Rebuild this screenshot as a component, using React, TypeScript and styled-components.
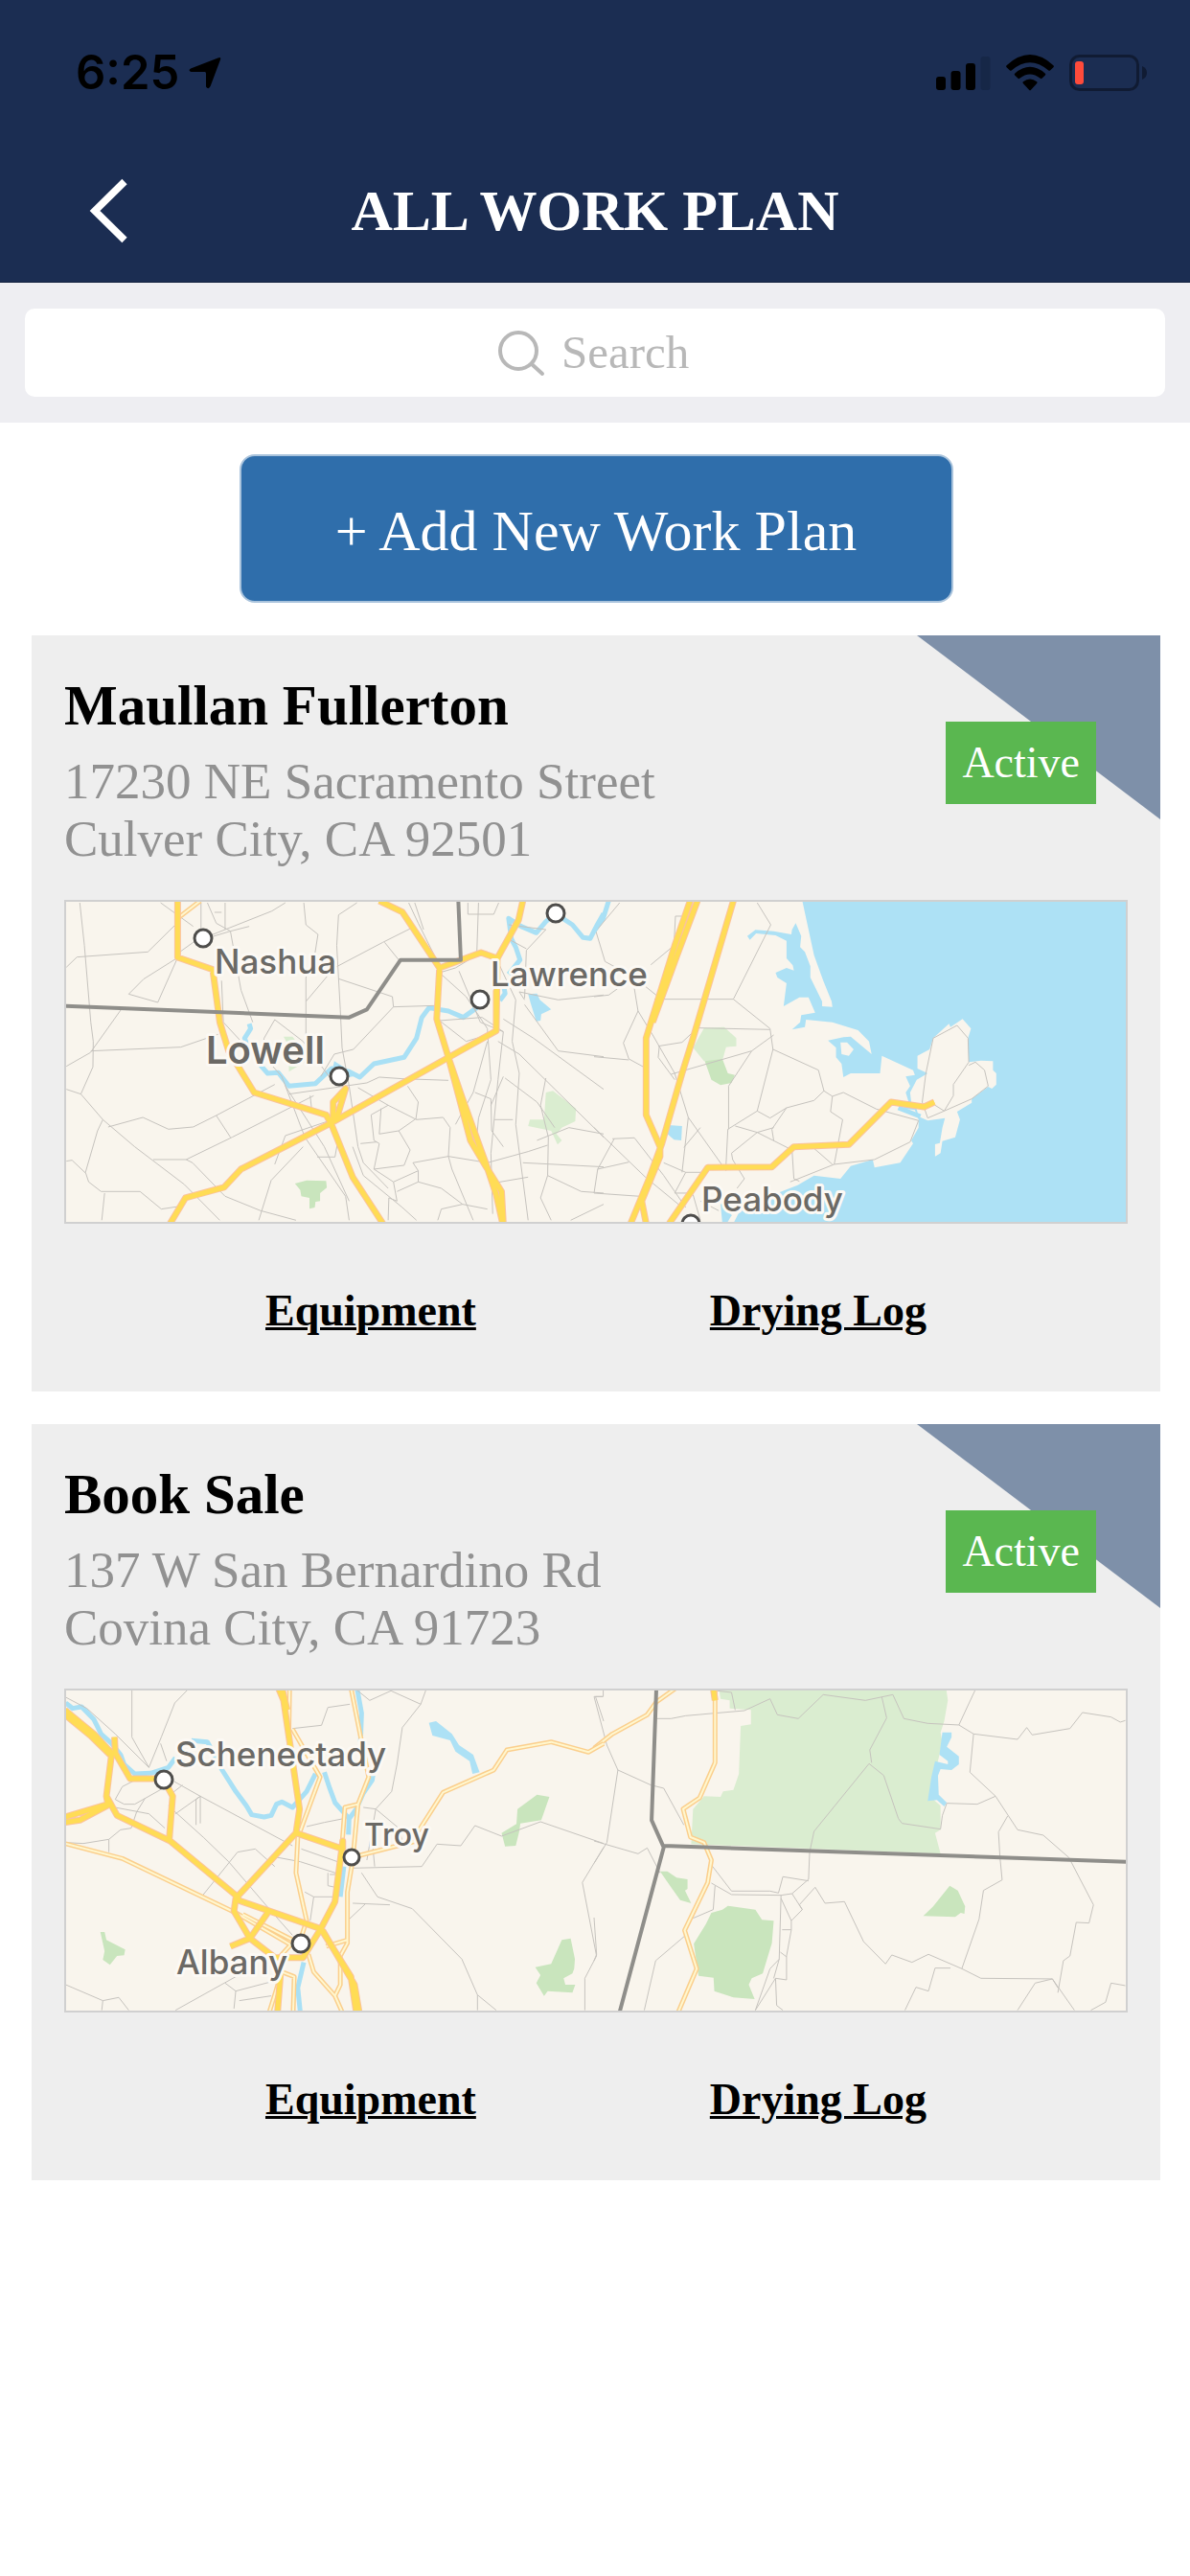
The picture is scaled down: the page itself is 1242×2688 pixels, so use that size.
import React from "react";
import styled, { createGlobalStyle } from "styled-components";

const GlobalStyle = createGlobalStyle`
  *, *::before, *::after { box-sizing: border-box; }
  body {
    margin: 0;
    background: #ffffff;
    color: #000000;
    font-family: "Liberation Serif", "Times New Roman", serif;
  }
  h1, h2, p { margin: 0; }
`;

/* ---------- header ---------- */

const Header = styled.header`
  background: #1b2d52;
  border-bottom: 1px solid #14223f;
`;

const StatusBar = styled.div`
  display: flex;
  align-items: center;
  justify-content: space-between;
  padding: 57px 44px 51px 79px;
`;

const StatusGroup = styled.div<{ $gap: number }>`
  display: flex;
  align-items: center;
  gap: ${(p) => p.$gap}px;
`;

const Clock = styled.span`
  font-family: Inter, "Liberation Sans", sans-serif;
  font-size: 49px;
  font-weight: 600;
  line-height: 38px;
`;

const NavBar = styled.nav`
  display: grid;
  grid-template-columns: 1fr auto 1fr;
  align-items: center;
  padding: 40px 90px;
`;

const BackButton = styled.button`
  justify-self: start;
  display: flex;
  padding: 0;
  border: 0;
  background: none;
  cursor: pointer;
`;

const ScreenTitle = styled.h1`
  color: #ffffff;
  font-size: 60px;
  font-weight: 700;
  line-height: 68px;
`;

/* ---------- search ---------- */

const SearchBar = styled.div`
  padding: 27px 26px;
  background: #eeeef2;
`;

const SearchField = styled.label`
  display: flex;
  align-items: center;
  justify-content: center;
  gap: 16px;
  height: 92px;
  border-radius: 10px;
  background: #ffffff;
`;

const SearchInput = styled.input`
  width: 136px;
  padding: 0;
  border: 0;
  outline: 0;
  background: none;
  font-family: inherit;
  font-size: 49px;
  line-height: 56px;
  color: #000000;
  &::placeholder {
    color: #b8b8b8;
    opacity: 1;
  }
`;

/* ---------- content ---------- */

const Content = styled.main`
  display: flex;
  flex-direction: column;
  align-items: center;
  gap: 34px;
  padding: 33px 31px 33px 33px;
`;

const AddButton = styled.button`
  width: 745px;
  max-width: 100%;
  height: 155px;
  padding: 4px 0 0;
  border: 2px solid #a9c3dc;
  border-radius: 16px;
  background: #2f6eab;
  color: #ffffff;
  font-family: inherit;
  font-size: 60px;
  line-height: 68px;
  cursor: pointer;
`;

const Card = styled.article`
  position: relative;
  align-self: stretch;
  background: #eeeeee;
`;

const CardBody = styled.div`
  padding: 34px 34px 0;
`;

const Corner = styled.div`
  position: absolute;
  top: 0;
  right: 0;
  width: 254px;
  height: 192px;
  background: #7e90a9;
  clip-path: polygon(0 0, 100% 0, 100% 100%);
`;

const StatusBadge = styled.span`
  position: absolute;
  top: 90px;
  right: 67px;
  padding: 16px 17px;
  background: #5ab750;
  color: #ffffff;
  font-size: 46px;
  line-height: 54px;
`;

const PlanName = styled.h2`
  font-size: 59px;
  font-weight: 700;
  line-height: 78px;
`;

const Address = styled.p`
  margin-top: 10px;
  color: #919191;
  font-size: 53px;
  line-height: 60px;
`;

const MapFrame = styled.div`
  margin-top: 34px;
  height: 338px;
  border: 2px solid #d0d0d0;
  background: #f9f5ed;
  overflow: hidden;
`;

const MapSvg = styled.svg`
  display: block;
  width: 100%;
  height: 100%;
`;

const Links = styled.div`
  display: flex;
  justify-content: space-evenly;
  padding: 64px 0 57px;
`;

const TextLink = styled.a`
  color: #000000;
  font-size: 46px;
  font-weight: 700;
  line-height: 54px;
  text-decoration: underline;
  text-decoration-thickness: 3px;
`;

/* ---------- map layers ---------- */

const Minor = styled.path`
  fill: none;
  stroke: #c6c3be;
  stroke-width: 1px;
  vector-effect: non-scaling-stroke;
`;

const River = styled.path`
  fill: none;
  stroke: #a9e0f5;
  stroke-width: 5px;
  stroke-linejoin: round;
  vector-effect: non-scaling-stroke;
`;

const Border = styled.path`
  fill: none;
  stroke: #8f8e8a;
  stroke-width: 4px;
  stroke-linejoin: round;
  vector-effect: non-scaling-stroke;
`;

const Stroke = styled.path<{ $color: string; $width: number }>`
  fill: none;
  stroke: ${(p) => p.$color};
  stroke-width: ${(p) => p.$width}px;
  stroke-linejoin: round;
  vector-effect: non-scaling-stroke;
`;

const Area = styled.path<{ $color: string }>`
  fill: ${(p) => p.$color};
`;

type LabelSize = "small" | "medium" | "large";

const labelFont = { small: 32, medium: 35, large: 40 };

const PlaceName = styled.text<{ $size: LabelSize }>`
  font-family: Inter, "Liberation Sans", sans-serif;
  font-size: ${(p) => labelFont[p.$size]}px;
  font-weight: ${(p) => (p.$size === "large" ? 600 : 500)};
  fill: #6b6965;
  stroke: #fcf9f4;
  stroke-width: 6px;
  stroke-linejoin: round;
  paint-order: stroke;
`;

const WATER = "#ade1f5";
const PARK = "#c9e5bd";
const FOREST = "#daedd0";

/* Each map is made of a west and an east tile, each with its own grid. */
type Tile = {
  areas?: [string, string][];
  minor: string;
  rivers?: string;
  highways: string;
  routes?: string;
  border?: string;
};

type Place = { name: string; x: number; y: number; size: LabelSize };
type Dot = { x: number; y: number; r: number };

type MapData = {
  label: string;
  top: number;
  west: Tile;
  east: Tile;
  places: Place[];
  dots: Dot[];
};

const TileLayers = ({ tile }: { tile: Tile }) => (
  <>
    {tile.areas?.map(([color, d]) => <Area key={d} $color={color} d={d} />)}
    {tile.rivers && <River d={tile.rivers} />}
    <Minor d={tile.minor} />
    {tile.routes && (
      <>
        <Stroke $color="#fbcf8d" $width={5} d={tile.routes} />
        <Stroke $color="#fff7cf" $width={2} d={tile.routes} />
      </>
    )}
    <Stroke $color="#fbc39d" $width={7} d={tile.highways} />
    <Stroke $color="#ffdc55" $width={5} d={tile.highways} />
    {tile.border && <Border d={tile.border} />}
  </>
);

const AreaMap = ({ map }: { map: MapData }) => (
  <MapFrame>
    <MapSvg
      viewBox="0 0 1106 334"
      preserveAspectRatio="xMidYMid slice"
      role="img"
      aria-label={map.label}
    >
      <g transform={`matrix(0.3827 0 0 0.3333 551 ${map.top})`}>
        <TileLayers tile={map.east} />
      </g>
      <g transform={`matrix(0.3699 0 0 0.3333 -19 ${map.top})`}>
        <TileLayers tile={map.west} />
      </g>
      {map.dots.map((d) => (
        <circle key={`${d.x}-${d.y}`} cx={d.x} cy={d.y} r={d.r} fill="#fff" stroke="#4e4d4b" strokeWidth="3" />
      ))}
      {map.places.map((p) => (
        <PlaceName key={p.name} x={p.x} y={p.y} $size={p.size}>
          {p.name}
        </PlaceName>
      ))}
    </MapSvg>
  </MapFrame>
);

const lowellMap: MapData = {
  label: "Map of Nashua, Lowell, Lawrence and Peabody",
  top: -21,
  west: {
    areas: [
      [PARK, "M697 945L730 935L785 937L787 958L768 975L768 1000L755 1002L753 1020L738 1024L738 990L715 985L712 965Z"],
      [FOREST, "M1405 660L1425 655L1490 710L1488 750L1450 770L1435 790L1450 810L1438 823L1420 780L1355 765L1360 745L1400 745Z"],
      [FOREST, "M665 485L690 485L715 520L725 565L680 595L680 570L695 545Z"],
      [WATER, "M1355 352L1380 350L1388 370L1420 400L1392 415L1390 435L1378 437L1362 380Z"],
      [WATER, "M808 562L850 590L880 605L850 612L800 600Z"],
    ],
    rivers:
      "M568 445L572 460L555 490L565 520M600 575L620 600L650 598L680 640L755 632L800 585L850 595L880 612L920 570L1005 550L1040 490L1055 425L1075 395L1130 405L1172 425L1210 395M1275 372L1290 350L1286 325M1300 290L1332 245L1320 205L1308 180L1300 115L1335 140L1378 160L1405 125L1432 100L1480 135L1510 175L1530 178L1550 135L1568 100",
    minor:
      "M90 66L103 200L121 440L128 500L127 580L93 665L155 745L245 830L385 948L485 1060M52 268L82 236L282 220L366 128M52 578L120 535L210 395M121 530L375 518L480 478M228 352L310 378L366 238M228 352L270 305L366 238M318 66L410 140M432 66V170M670 66L632 92L500 150L410 190L366 225M450 66L475 130L515 155L545 340L578 440M500 66V150M470 96H490M440 180L515 155L568 140M722 66L728 135L762 165L750 250L728 300V498M872 66L820 104L815 200L825 400L830 520L850 640L875 830L890 880L960 960M1035 140L945 190L808 270L728 375M950 190L990 245M820 304L972 360L975 392L862 525L808 540L770 610M975 392L1095 388M1018 66L1045 130L1090 230M1035 66L1060 150M93 665L52 650M155 745L140 780L106 910L115 940L150 970L260 970L320 1025L380 1015M160 975L152 1060M52 875L68 872L106 912M170 768L268 738L340 775L410 768L475 732L640 635M475 732L515 800M297 870H390L408 880L500 985L600 1030L700 1060M390 870L520 800L750 670M490 310L495 440L545 500L620 560L660 610L725 800L840 985L850 1060M640 432L610 490L600 560M640 432L720 500L800 620M670 640L780 830L850 1000M595 1060L630 935L720 830M640 885L670 795L790 750M760 862H810L820 800M680 665L900 630L935 612L1000 617L1130 622M740 670L745 720M875 645L960 700L1040 745L1115 738L1135 770L1130 860M1015 640L1045 690L1038 745M960 700L912 730L920 810L935 820L920 900L1005 888L1022 840L990 780L1035 745M860 830L890 920L1000 1020L1040 1060M882 820L928 815M960 1060L962 990L985 1000L975 940M940 710L935 790L990 780M920 900L975 940L1045 905L1030 880L1130 860M1045 905V940L1110 960L1170 1010M1045 940L985 970M1130 860L1140 900L1200 1060M1100 1060L1110 1025L1170 1010L1240 1025M1130 860L1240 880L1355 845L1410 825M1250 945L1355 925M1105 285L1150 270L1210 230L1215 66M1105 285L1180 360L1240 460L1250 620L1215 740L1210 800M1160 280L1220 440L1285 470M1265 240L1320 370L1310 500L1330 600L1320 760L1355 1060M1105 435L1180 500L1240 480M1105 435L1225 425L1285 470L1270 620L1250 850L1255 1040M1285 430L1370 490L1568 650M1270 500L1330 540L1568 800M1345 370L1330 345L1440 370L1568 355M1345 385L1440 530L1568 548M1285 610L1250 700M1290 615L1380 690L1430 770M1405 615L1390 700L1412 800L1410 920L1390 990L1420 1060M1340 880L1568 893M1410 920L1505 970L1568 975M1380 810L1470 770L1568 790M1475 1060L1568 1010M1205 660L1250 680L1252 780L1285 830M1260 745H1312M1240 500L1200 660L1150 760M1185 66V102H1258L1272 66M1345 365L1350 215L1405 150L1300 135M1350 210L1300 180",
    routes: "M366 115L430 60",
    highways:
      "M366 60V237L465 275L485 440L510 530L582 660L785 730L800 760L860 925L945 1070M345 1070L388 990L497 957L545 900L800 755L1265 467L1268 240M1340 60L1328 120L1268 240L1222 222L1105 270L1000 95L935 60M1105 270L1097 430L1130 550L1192 810L1235 890L1280 970L1285 1070M1130 550L1170 680L1235 880L1265 980L1283 1070M805 755V690L840 648L815 740M1265 467V340",
    border: "M46 389L850 425L900 400L995 245H1165L1158 60",
  },
  east: {
    areas: [
      [
        WATER,
        "M568 60L600 230L625 310L648 375L650 392L622 390L622 375L590 300L590 265L575 220L562 205L565 170L550 130L540 150L538 165L490 155L440 151L418 170L425 182L442 162L495 168L525 185L525 240L542 262L545 278L525 270L495 285L500 300L525 318L517 390L560 362L585 362L603 410L565 418L562 440L540 463L575 455L578 432L650 440L720 465L750 500L757 540L700 485L680 487L638 497L660 520L660 550L675 570L680 612L700 600L780 600L785 545L870 590L875 605L850 610L862 640L850 660L858 690L840 710L875 715L885 745L885 770L865 810L870 820L835 880L765 895L760 870L700 890L672 930L600 920L555 950L500 975L430 1000L415 1040L400 1025L380 1070H1460V60Z",
      ],
      [
        "#f9f5ed",
        "M882 545L915 525L925 490L968 445L972 455L1005 430L1028 460L1020 490L1022 565L1055 560L1088 562L1088 590L1097 600L1097 635L1085 648L1075 642L1030 680L1030 692L990 720L998 745L985 800L950 812L945 850L930 860L930 822L943 818L950 770L957 740L910 748L885 735L880 712L865 690L862 660L880 620L910 600L882 585Z",
      ],
      ["#f9f5ed", "M672 503L690 503L708 525L695 545L675 540Z"],
      [WATER, "M203 762L240 765L238 810L218 808L200 790Z"],
      [WATER, "M345 1010L362 1000L375 1045L362 1070H350Z"],
      [FOREST, "M300 458L355 455L388 490L388 515L360 518L350 560L300 562L270 520Z"],
      [PARK, "M302 562L350 555L365 600L384 605L375 630L345 637L320 620Z"],
    ],
    rivers: "M0 155L25 115L40 60M890 735L830 708",
    minor:
      "M445 66L482 135L380 368H165M380 368L480 460L488 525L445 718L365 775L360 885M285 458L480 463M490 480L430 530L210 603M430 530L367 640V775M488 525L612 590L627 655L600 685L525 708L480 740L445 718M627 655L650 672L645 720L678 745L655 885M650 672L680 660L770 712L885 748L862 815L765 870L655 885L535 940M490 770L445 785L375 850L378 870L410 930L390 960M385 765L445 785L540 840L545 930L560 938M160 480L220 600L257 738L240 910M257 738L360 905M245 832L290 770M110 335L120 405L80 505L95 555L135 580M120 405L160 480M175 515L240 503L280 460M178 515L175 550L220 620M0 360L40 355L70 330M70 66L5 155L30 250L110 300L180 365M240 108H222L218 200L155 260M0 548L95 558M0 770L140 925L230 1010M50 805L110 802L190 920L250 1020M190 880L250 910H310M250 910L220 975H260M55 805L10 900L0 975M10 900L95 878M0 975L125 985M525 708L485 775L490 810M600 835L650 885M895 690L905 600L925 490L990 450L1020 490L1022 565L980 635V670L955 718L930 700M955 718L1030 680L1075 640L1065 590L1040 565L1022 575M910 740L895 690M955 718L910 740M270 980L290 1060M290 1000L340 1030",
    highways:
      "M262 60L220 200L150 460L142 490V730L180 830V860L130 1000L142 1070M282 60L225 235L160 440M380 60L270 490L240 600L185 820L150 930L100 1070M205 1070L310 895L485 893L545 830L695 823L810 690L900 705L928 690",
  },
  places: [
    { name: "Nashua", x: 155, y: 75, size: "medium" },
    { name: "Lawrence", x: 443, y: 88, size: "medium" },
    { name: "Lowell", x: 146, y: 169, size: "large" },
    { name: "Peabody", x: 663, y: 323, size: "medium" },
  ],
  dots: [
    { x: 143, y: 38, r: 9 },
    { x: 432, y: 102, r: 9 },
    { x: 285, y: 182, r: 9 },
    { x: 511, y: 12, r: 9 },
    { x: 652, y: 336, r: 9 },
  ],
};

const albanyMap: MapData = {
  label: "Map of Schenectady, Troy and Albany",
  top: -23,
  west: {
    areas: [
      [PARK, "M148 825L160 825L165 850L218 880L215 898L195 900L175 928L155 912L160 885Z"],
      [PARK, "M1380 395L1415 402L1392 475L1333 485L1330 510L1320 555L1290 557L1280 515L1322 487L1325 440Z"],
      [PARK, "M1450 850L1475 845L1487 910L1485 940L1480 955L1455 970L1460 990L1488 990L1480 1015L1410 1010L1400 1025L1378 985L1390 960L1375 935L1420 925Z"],
      [WATER, "M1075 170L1095 165L1140 205L1160 240L1200 270L1218 325L1198 330L1190 290L1150 260L1135 225L1085 210Z"],
    ],
    rivers:
      "M50 108L70 125L95 120L130 160L150 205L180 235L205 270L215 300L245 330L290 328L340 310L360 280M405 226L450 230L470 270L490 315L530 385L560 430L575 458L610 465L630 460L645 425L660 418L690 435L730 385L755 330M780 325L795 375L810 420L850 470L870 440L890 390L915 350L920 310M872 60L885 140L882 230M850 460L848 520M825 715L835 620M722 920L705 1000L712 1075",
    minor:
      "M237 66V215L285 310M395 66L358 108L320 215L285 310M50 90L110 125L190 205L285 310M318 235L335 290M190 410L210 370L245 350M190 410L215 425L245 425L325 375M165 430L285 455L330 500M350 350L430 400V485M430 400L418 410V490M430 400L360 455M380 365L345 395M430 400L690 555M340 430L440 530L510 605L630 760L690 835M437 710L535 575L585 565L640 620M100 548L172 535L205 505L235 500L250 450L275 405M172 535V575M50 545L100 548M690 188L772 178L790 122L852 112M870 66L908 100L968 70L1052 112L1067 66M1052 112L1000 185L985 300L970 385L925 440L890 435M925 440L990 500L1000 540M925 440L900 600M730 495L780 482L835 470M715 565L830 610M640 590L712 605L825 645M790 640V680L810 685M820 645H795M725 700L750 715H810L770 800M750 715L740 790M860 625L1055 620L1098 550L1165 555L1205 492L1280 525L1390 480L1568 548M915 540L922 620M885 640L930 715L1028 752L1168 910L1212 1022L1265 1070M1212 1022V1070M860 735L965 740M895 738L850 785M1568 560L1508 670L1548 900L1515 970V1070M1565 88H1545L1568 165M50 990L155 1040L200 1030L228 1070M155 1040L152 1070M360 1070L530 965L520 940M500 985L530 1010L640 978M530 1010L525 1065M540 1040L630 1025",
    routes:
      "M48 548L210 595L530 765L685 865L640 920M550 770L690 850M855 60L905 340L875 425L860 600L845 700V860L825 900L825 990L810 1025M875 425L838 435L830 550M845 850L785 870M690 190L768 340L705 530L700 640L730 790L715 840M682 60L680 190M880 585L1040 540M1045 510L1115 388L1258 318L1295 255L1420 230L1525 262L1568 235M735 895L750 950L810 1025L830 1075M625 1075L660 950L695 965L692 1075",
    highways:
      "M48 130L130 205L180 265L165 400L195 460L345 540L530 710L540 725M48 145L120 210L175 270M48 482L90 475L170 428L165 400M48 465L170 425M188 215L190 265L232 345H325L352 400L342 540M650 60L665 100L710 440L700 515L530 720L525 760L570 845L640 905L720 905L770 815M660 60L675 130M700 515L832 565V540L825 600L810 730L770 815M535 725L770 815L855 965L870 1075M620 765L570 845L515 870M775 820L865 990L878 1075M648 1075L656 960",
  },
  east: {
    areas: [
      [
        FOREST,
        "M340 60H960L965 100L955 165L945 200L950 230L940 280L915 400L945 430V505L930 515L945 580L265 550L270 440L300 400L345 402L352 385L380 380L395 330L400 180L428 175V130L370 125V100L345 95Z",
      ],
      [
        WATER,
        "M950 200L975 200L975 215L962 245L995 275V300L975 318L945 315L938 335L940 395L962 420L955 432L935 412L910 415L920 340L930 290L965 300L965 290L942 270Z",
      ],
      [
        PARK,
        "M320 765L350 755L365 743L440 755L458 787L490 790L485 860L460 955L430 970L422 990L438 1035L380 1030L328 1010L326 968L285 962L272 862L305 800Z",
      ],
      [PARK, "M180 635L200 635L225 655L255 660V690L248 695L265 735L235 725L210 685Z"],
      [PARK, "M970 680L992 695L1012 745L1010 768L1000 765L985 778L898 775L925 745Z"],
    ],
    minor:
      "M0 88L35 240L65 318L155 365L190 375L245 490M65 318L35 545L0 610M0 540L120 580L145 562L180 640M0 88H25V66M172 157H210L250 148L410 132L480 95L500 145L557 157L625 82L740 100L815 82L845 157L910 172L995 177L1035 205L1155 222L1180 185L1195 208L1298 188L1332 138L1410 152L1435 168L1449 163M305 66L375 75L385 130M995 177L1040 66M785 90L798 155L752 255L757 295M1035 205L1025 325L1095 400L1155 505L1225 522L1295 592L1362 740L1350 797L1315 795L1298 900L1280 915L1265 1015M750 298L790 335L830 470L840 485L945 503L950 460L962 422L1045 425L1095 400M750 298L600 510L588 575L585 660L540 705L510 710L375 708L320 672M320 615L375 697H480L503 703L515 652L585 665M1128 462L1103 512L1107 590L1113 662L1062 695L1050 785L1003 940L1055 970L1250 972L1310 1070M1003 940L912 895L867 920L812 897L795 925L735 855L683 730L630 735L603 685L560 740L568 755L538 790V818L525 900V975L495 970L440 1070M510 710L505 910L480 940L440 1070M505 910L490 970M510 720L538 790M540 705L568 755M513 818H538M508 888L525 903M495 970L498 1055L515 1070M848 1070L878 998L912 1010L930 938H972M1155 1070L1203 985L1250 972L1265 1000M1355 1070L1395 1045L1410 985L1449 993M330 680L325 755L270 782M247 838L168 915L137 1070M0 780L7 895L0 915",
    routes:
      "M0 250L50 205L145 145L170 105L225 60M330 60V295L288 405L243 440L263 528L300 545L320 600L310 670L247 820L280 940L230 1075",
    highways: "M325 60L330 100",
    border: "M170 60L157 475L190 560L70 1075M190 555L1460 606",
  },
  places: [
    { name: "Schenectady", x: 114, y: 79, size: "medium" },
    { name: "Troy", x: 311, y: 162, size: "small" },
    { name: "Albany", x: 115, y: 296, size: "medium" },
  ],
  dots: [
    { x: 102, y: 93, r: 9 },
    { x: 298, y: 174, r: 8 },
    { x: 245, y: 264, r: 9 },
  ],
};

const plans = [
  {
    name: "Maullan Fullerton",
    street: "17230 NE Sacramento Street",
    city: "Culver City, CA 92501",
    status: "Active",
    map: lowellMap,
  },
  {
    name: "Book Sale",
    street: "137 W San Bernardino Rd",
    city: "Covina City, CA 91723",
    status: "Active",
    map: albanyMap,
  },
];

/* ---------- icons ---------- */

const LocationIcon = () => (
  <svg width="34" height="34" viewBox="0 0 34 34" aria-hidden="true">
    <path d="M30.500 1.400Q34 0 33 3.200L22.600 31Q20.500 35 18 31.500V17.500Q18 16.200 16.800 16H2.500Q-1.200 14.600 2 12.600Z" fill="#000" />
  </svg>
);

const SignalIcon = () => (
  <svg width="57" height="38" viewBox="0 0 57 38" aria-hidden="true">
    <rect x="0" y="23" width="10" height="14" rx="3" />
    <rect x="15.500" y="17" width="10" height="20" rx="3" />
    <rect x="31" y="9" width="10" height="28" rx="3" />
    <rect x="46.500" y="2" width="10" height="35" rx="3" fill="#162747" />
  </svg>
);

const WifiIcon = () => (
  <svg width="50" height="38" viewBox="0 0 50 38" aria-hidden="true">
    <path d="M0.600 11.200Q25 -11 49.400 11.200Q50.400 12.200 49.400 13.200L46 16.500Q45.200 17.200 44.300 16.500Q25 0 5.700 16.500Q4.800 17.200 4 16.500L0.600 13.200Q-0.400 12.200 0.600 11.200Z" />
    <path d="M9.100 19.700Q25 6 40.900 19.700Q41.800 20.600 40.900 21.500L37.500 24.800Q36.700 25.500 35.800 24.800Q25 16 14.200 24.800Q13.300 25.500 12.500 24.800L9.100 21.500Q8.200 20.600 9.100 19.700Z" />
    <path d="M17.800 28.200Q25 23 32.200 28.200Q33 29 32.200 30L26 36.800Q25 37.800 24 36.800L17.800 30Q17 29 17.800 28.200Z" />
  </svg>
);

const BatteryIcon = () => (
  <svg width="82" height="38" viewBox="0 0 82 38" aria-hidden="true">
    <rect x="1.500" y="1.500" width="70" height="35" rx="9" fill="none" stroke="#101b33" strokeWidth="3" />
    <path d="M76 12Q81 14 81 19Q81 24 76 26Z" fill="#101b33" />
    <rect x="6" y="7" width="9" height="24" rx="3" fill="#ff4b3b" />
  </svg>
);

const ChevronIcon = () => (
  <svg width="46" height="68" viewBox="0 0 46 68" aria-hidden="true">
    <path d="M40 3.500L9 34L40 64.500" fill="none" stroke="#fff" strokeWidth="7.500" />
  </svg>
);

const SearchIcon = () => (
  <svg width="50" height="50" viewBox="0 0 50 50" fill="none" stroke="#b8b8b8" strokeWidth="4" strokeLinecap="round" aria-hidden="true">
    <circle cx="21" cy="23" r="19" />
    <path d="M35 37L46 47" />
  </svg>
);

export default function App() {
  return (
    <>
      <GlobalStyle />
      <Header>
        <StatusBar>
          <StatusGroup $gap={10}>
            <Clock>6:25</Clock>
            <LocationIcon />
          </StatusGroup>
          <StatusGroup $gap={16}>
            <SignalIcon />
            <WifiIcon />
            <BatteryIcon />
          </StatusGroup>
        </StatusBar>
        <NavBar>
          <BackButton aria-label="Back">
            <ChevronIcon />
          </BackButton>
          <ScreenTitle>ALL WORK PLAN</ScreenTitle>
        </NavBar>
      </Header>
      <SearchBar>
        <SearchField>
          <SearchIcon />
          <SearchInput type="text" placeholder="Search" aria-label="Search" />
        </SearchField>
      </SearchBar>
      <Content>
        <AddButton>+ Add New Work Plan</AddButton>
        {plans.map((plan) => (
          <Card key={plan.name}>
            <Corner />
            <StatusBadge>{plan.status}</StatusBadge>
            <CardBody>
              <PlanName>{plan.name}</PlanName>
              <Address>
                {plan.street}
                <br />
                {plan.city}
              </Address>
              <AreaMap map={plan.map} />
            </CardBody>
            <Links>
              <TextLink href="#equipment">Equipment</TextLink>
              <TextLink href="#drying-log">Drying Log</TextLink>
            </Links>
          </Card>
        ))}
      </Content>
    </>
  );
}
